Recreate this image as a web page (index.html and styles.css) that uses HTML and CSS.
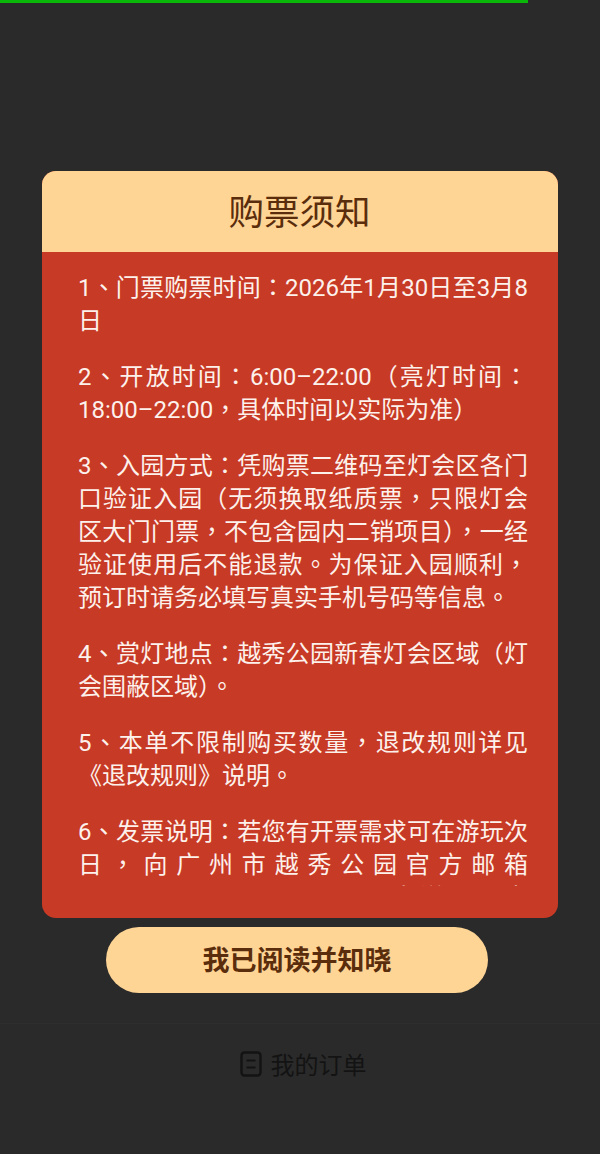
FILE: index.html
```html
<!DOCTYPE html>
<html lang="zh-CN">
<head>
<meta charset="utf-8">
<title>购票须知</title>
<link rel="stylesheet" href="styles.css">
</head>
<body>
<div class="progress"></div>
<main class="page">
  <section class="notice">
    <h1 class="notice-title">购票须知</h1>
    <div class="notice-body">
      <div class="notice-scroll">
        <p>1<span class="pm" lang="zh-TW">、</span>门票购票时间<span class="pm" lang="zh-TW">：</span>2026年1月30日至3月8日</p>
        <p>2<span class="pm" lang="zh-TW">、</span>开放时间<span class="pm" lang="zh-TW">：</span>6:00–22:00（亮灯时间<span class="pm" lang="zh-TW">：</span>18:00–22:00<span class="pm" lang="zh-TW">，</span>具体时间以实际为准）</p>
        <p>3<span class="pm" lang="zh-TW">、</span>入园方式<span class="pm" lang="zh-TW">：</span>凭购票二维码至灯会区各门口验证入园（无须换取纸质票<span class="pm" lang="zh-TW">，</span>只限灯会区大门门票<span class="pm" lang="zh-TW">，</span>不包含园内二销项目）<span class="pm" lang="zh-TW">，</span>一经验证使用后不能退款<span class="pm" lang="zh-TW">。</span>为保证入园顺利<span class="pm" lang="zh-TW">，</span>预订时请务必填写真实手机号码等信息<span class="pm" lang="zh-TW">。</span></p>
        <p>4<span class="pm" lang="zh-TW">、</span>赏灯地点<span class="pm" lang="zh-TW">：</span>越秀公园新春灯会区域（灯会围蔽区域）<span class="pm" lang="zh-TW">。</span></p>
        <p>5<span class="pm" lang="zh-TW">、</span>本单不限制购买数量<span class="pm" lang="zh-TW">，</span>退改规则详见《退改规则》说明<span class="pm" lang="zh-TW">。</span></p>
        <p>6<span class="pm" lang="zh-TW">、</span>发票说明<span class="pm" lang="zh-TW">：</span>若您有开票需求可在游玩次日<span class="pm" lang="zh-TW">，</span>向广州市越秀公园官方邮箱 yuexiupark-office@gz.gov.cn 发送开票申请资料<span class="pm" lang="zh-TW">。</span></p>
      </div>
    </div>
  </section>
  <button class="confirm" type="button">我已阅读并知晓</button>
</main>
<footer class="footer">
  <svg class="footer-icon" viewBox="0 0 22 26" width="22" height="26" aria-hidden="true">
    <rect x="1.5" y="1.5" width="19" height="23" rx="3" fill="none" stroke="currentColor" stroke-width="2.4"/>
    <path d="M6.5 9.5h9M6.5 16.5h9" fill="none" stroke="currentColor" stroke-width="2.2"/>
  </svg>
  <span>我的订单</span>
</footer>
</body>
</html>
```
FILE: styles.css
```css
* { box-sizing: border-box; }
html, body { margin: 0; padding: 0; }
body {
  width: 600px;
  height: 1154px;
  overflow: hidden;
  background: #2a2a2a;
  font-family: Roboto, "Noto Sans CJK SC", sans-serif;
}
.progress {
  width: 528px;
  height: 3px;
  background: #0ab80a;
}
.page {
  display: flex;
  flex-direction: column;
  align-items: center;
  padding-top: 168px;
}
.notice {
  width: 516px;
  height: 747px;
  border-radius: 14px;
  overflow: hidden;
  background: #c73a25;
  display: flex;
  flex-direction: column;
}
.notice-title {
  margin: 0;
  height: 81px;
  padding-right: 1px;
  background: #ffd595;
  color: #5a2d0c;
  font-size: 35.5px;
  font-weight: 400;
  line-height: 85px;
  text-align: center;
}
.notice-body {
  padding: 20px 30px 32px 36px;
  flex: 1;
  min-height: 0;
}
.notice-scroll {
  height: 100%;
  overflow: hidden;
  color: #fdf1ec;
  font-size: 24px;
  line-height: 33px;
  text-align: justify;
}
.notice-scroll p { margin: 0 0 23px; }
.pm {
  font-family: "Noto Sans CJK TC", sans-serif;
  line-height: 0;
}
.confirm {
  margin: 9px 0 0 -6px;
  padding: 0 0 4px;
  width: 382px;
  height: 66px;
  border: 0;
  border-radius: 33px;
  background: #ffd595;
  color: #5a2d0c;
  font-family: inherit;
  font-size: 27px;
  font-weight: 700;
}
.footer {
  margin-top: 30px;
  height: 80px;
  padding-left: 6px;
  border-top: 1px solid #2e2e2e;
  display: flex;
  align-items: center;
  justify-content: center;
  gap: 9px;
  color: #131313;
  font-size: 24px;
}
```
